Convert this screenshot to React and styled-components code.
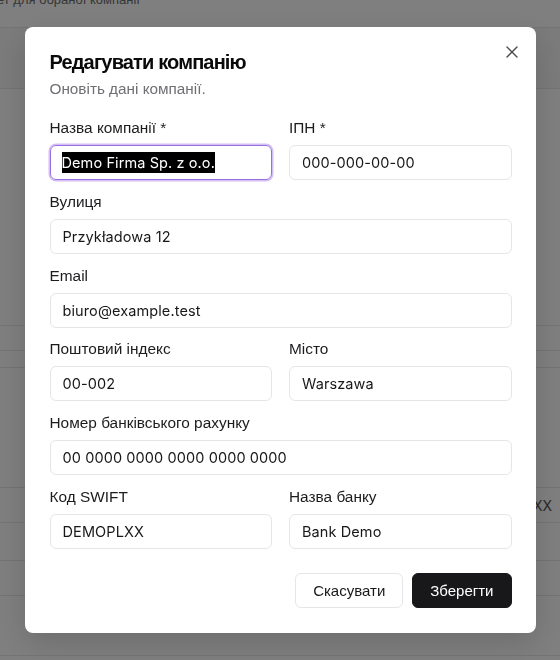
import React from 'react'
import styled, { createGlobalStyle } from 'styled-components'
import { X } from 'lucide-react'

const GlobalStyle = createGlobalStyle`
  * { box-sizing: border-box; }
  html, body { margin: 0; padding: 0; background: #fff; }
  body { font-family: "Liberation Sans", Arial, sans-serif; color: #18181b; }
`

const Page = styled.div`
  height: 660px;
  overflow: hidden;
`

const PageNote = styled.p`
  margin: -7px 0 0 -3px;
  height: 35px;
  font-size: 13px;
  line-height: 14px;
  color: #6e6e6e;
  border-bottom: 1px solid #e8e8e8;
`

const PageRow = styled.div`
  height: ${p => p.$h}px;
  border-bottom: 1px solid #e8e8e8;
  background: ${p => (p.$shade ? '#f7f7f8' : '#fff')};
  display: flex;
  align-items: center;
  justify-content: flex-end;
  padding-right: 8px;
  font-size: 14px;
  color: #555;
  font-family: Inter, sans-serif;
`

const Overlay = styled.div`
  position: fixed;
  inset: 0;
  background: rgba(0, 0, 0, 0.5);
  display: flex;
  align-items: center;
  justify-content: center;
`

const Dialog = styled.div`
  position: relative;
  width: 511px;
  background: #fff;
  border-radius: 8px;
  padding: 22px 24px 25px 25px;
  box-shadow: 0 10px 30px rgba(0, 0, 0, 0.15);
`

const CloseButton = styled.button`
  position: absolute;
  top: 14px;
  right: 13px;
  width: 22px;
  height: 22px;
  border: none;
  background: none;
  padding: 0;
  display: flex;
  align-items: center;
  justify-content: center;
  color: #4a4a4a;
  cursor: pointer;
`

const Title = styled.h2`
  margin: 0;
  font-size: 20px;
  line-height: 26px;
  font-weight: 700;
  letter-spacing: -0.85px;
  color: #0a0a0a;
`

const Subtitle = styled.p`
  margin: 4px 0 0;
  font-size: 15.3px;
  line-height: 20px;
  color: #6f6f74;
`

const Form = styled.div`
  margin-top: 20px;
  display: grid;
  grid-template-columns: 1fr 1fr;
  column-gap: 17px;
  row-gap: 12.8px;
`

const Field = styled.label`
  display: flex;
  flex-direction: column;
  gap: 8px;
  grid-column: ${p => (p.$wide ? '1 / -1' : 'auto')};
`

const Label = styled.span`
  font-size: 15.4px;
  line-height: 18px;
  color: #1c1c1f;
`

const Input = styled.input`
  height: 35px;
  width: 100%;
  border: 1px solid #e6e6e9;
  border-radius: 6px;
  padding: 0 12px;
  font-family: Inter, sans-serif;
  font-size: 14.5px;
  letter-spacing: 0.1px;
  color: #18181b;
  background: #fff;
  outline: none;
`

const FocusedBox = styled.div`
  height: 35px;
  border: 1.5px solid #9a6fe0;
  box-shadow: 0 0 0 1.5px #d3bff5;
  border-radius: 6px;
  padding: 0 11px;
  display: flex;
  align-items: center;
  font-family: Inter, sans-serif;
  font-size: 14.5px;
  letter-spacing: 0.1px;
`

const Selection = styled.span`
  background: #000;
  color: #fff;
  line-height: 21px;
`

const Footer = styled.div`
  margin-top: 24px;
  display: flex;
  justify-content: flex-end;
  gap: 9px;
`

const Button = styled.button`
  height: 35px;
  padding: 0 17px;
  border-radius: 6px;
  font-family: "Liberation Sans", Arial, sans-serif;
  font-size: 15px;
  cursor: pointer;
  border: 1px solid ${p => (p.$primary ? '#18181b' : '#e6e6e9')};
  background: ${p => (p.$primary ? '#18181b' : '#fff')};
  color: ${p => (p.$primary ? '#fff' : '#18181b')};
`

const backdropRows = [
  { h: 61, shade: true },
  { h: 237 },
  { h: 25 },
  { h: 17 },
  { h: 120 },
  { h: 35, text: 'DEMOPLXX' },
  { h: 38 },
  { h: 35 },
  { h: 60 },
]

const fields = [
  { label: 'ІПН *', value: '000-000-00-00' },
  { label: 'Вулиця', value: 'Przykładowa 12', wide: true },
  { label: 'Email', value: 'biuro@example.test', wide: true },
  { label: 'Поштовий індекс', value: '00-002' },
  { label: 'Місто', value: 'Warszawa' },
  { label: 'Номер банківського рахунку', value: '00 0000 0000 0000 0000 0000', wide: true },
  { label: 'Код SWIFT', value: 'DEMOPLXX' },
  { label: 'Назва банку', value: 'Bank Demo' },
]

export default function App() {
  return (
    <>
      <GlobalStyle />
      <Page>
        <PageNote>ет для обраної компанії</PageNote>
        {backdropRows.map((r, i) => (
          <PageRow key={i} $h={r.h} $shade={r.shade}>{r.text}</PageRow>
        ))}
      </Page>
      <Overlay>
        <Dialog>
          <CloseButton aria-label="Закрити">
            <X size={20} strokeWidth={1.6} />
          </CloseButton>
          <Title>Редагувати компанію</Title>
          <Subtitle>Оновіть дані компанії.</Subtitle>
          <Form>
            <Field>
              <Label>Назва компанії *</Label>
              <FocusedBox>
                <Selection>Demo Firma Sp. z o.o.</Selection>
              </FocusedBox>
            </Field>
            {fields.map(f => (
              <Field key={f.label} $wide={f.wide}>
                <Label>{f.label}</Label>
                <Input defaultValue={f.value} />
              </Field>
            ))}
          </Form>
          <Footer>
            <Button>Скасувати</Button>
            <Button $primary>Зберегти</Button>
          </Footer>
        </Dialog>
      </Overlay>
    </>
  )
}
